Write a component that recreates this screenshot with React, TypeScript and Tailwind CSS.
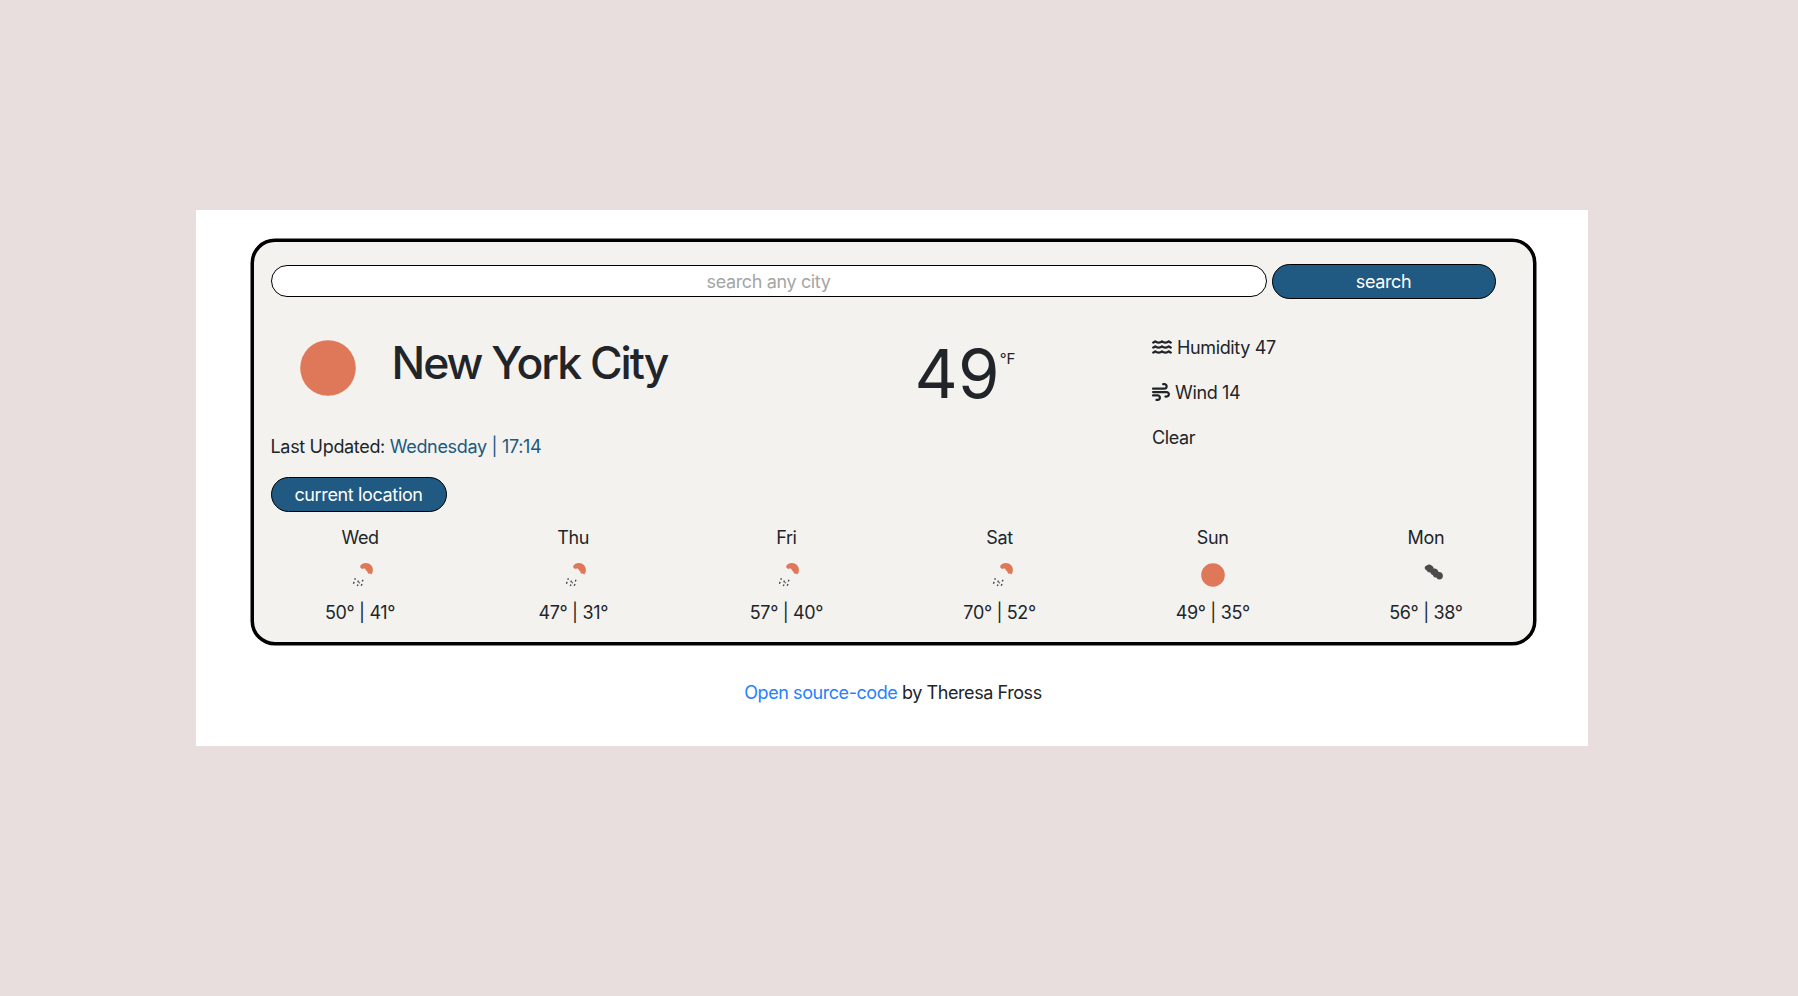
import { FaWater, FaWind } from "react-icons/fa6";

type Sky = "rain" | "clear" | "clouds";

interface Day {
  name: string;
  high: number;
  low: number;
  sky: Sky;
}

const days: Day[] = [
  { name: "Wed", high: 50, low: 41, sky: "rain" },
  { name: "Thu", high: 47, low: 31, sky: "rain" },
  { name: "Fri", high: 57, low: 40, sky: "rain" },
  { name: "Sat", high: 70, low: 52, sky: "rain" },
  { name: "Sun", high: 49, low: 35, sky: "clear" },
  { name: "Mon", high: 56, low: 38, sky: "clouds" },
];

function SkyIcon({ sky }: { sky: Sky }) {
  return (
    <svg viewBox="0 0 44 44" className="mt-[2px] mb-[2px] size-11" aria-hidden="true">
      {sky === "clear" && <circle cx="22" cy="22" r="11.8" fill="#df7858" />}
      {sky === "rain" && (
        <>
          <path
            d="M22.2 13C23.4 11 25.6 9.8 28 9.9C32 10 34.9 13 34.9 16.7C34.9 18.9 34.2 20.4 33.2 21.6C32.4 20.6 31.6 20.5 30.8 20.7C30 20.3 29.4 19.6 29.2 18.2C28.2 18 27.9 16.9 27.3 16C26.2 15.2 25 15.5 23.7 16.1C23.4 15.1 22.9 14.8 22.3 14.7Z"
            fill="#df7858"
          />
          <path
            d="M17.4 25.3l-.6 1.5M16.2 28.9l-.8 1.8M20.5 27.6l-.7 1.6M21.6 29.3l-.4 .9M20 31.4l-.7 1.7M25 26.8l-.7 1.7M24 30.9l-.8 1.9"
            stroke="#48484a"
            strokeWidth="1.4"
            fill="none"
          />
        </>
      )}
      {sky === "clouds" && (
        <path
          d="M20.7 14.8C20.9 13.2 22 12.8 22.8 12.6C23.8 11.2 26.4 11.2 27.5 12.5C28.9 13 29.6 14.1 29.6 15.5C32 15 34.2 16.4 34.6 19.1C36.9 18.7 38.7 20.2 38.9 22.4C39.1 24.7 37.5 26.6 35.3 26.6C33.9 26.6 32.9 25.8 32.4 24.6C30.5 24.6 29.1 23.6 28.8 22C27.4 21.7 26.7 20.8 26.5 19.5L24.9 19.6L24.2 18.8L23.3 18.8L23 17.5C21.7 17.3 20.7 16.3 20.7 14.8Z"
          fill="#4b4b4b"
        />
      )}
    </svg>
  );
}

export default function App() {
  return (
    <div className="flex h-[996px] w-full justify-center bg-[#e8dedd] pt-[210px] pr-[14px] font-[Inter,sans-serif] text-[18px] leading-[27px] tracking-[-0.02em] text-[#212529]">
      <main className="flex h-[536px] w-[1392px] shrink-0 flex-col items-center bg-white pt-[28.5px]">
        <section className="ml-[2px] h-[406px] w-[1285px] rounded-[24px] border-[3px] border-black bg-[#f3f2ef] pl-[17px] shadow-[0_0_0_0.5px_#000]">
          <form className="flex h-[77px] items-center gap-[5px] pt-[2px]">
            <input
              type="text"
              placeholder="search any city"
              className="h-8 w-[996px] rounded-full border border-black bg-white text-center placeholder:text-[#a5a5a5]"
            />
            <button type="button" className="h-[35px] w-[224px] rounded-full border border-black bg-[#205981] text-white">
              search
            </button>
          </form>

          <div className="flex h-[109px] items-start">
            <svg viewBox="0 0 56 56" className="mt-[21px] ml-[29px] size-14 shrink-0" aria-hidden="true">
              <circle cx="28" cy="28" r="27.8" fill="#df7858" />
            </svg>
            <h1 className="mt-[17px] ml-[36px] w-[523px] text-[44.5px] leading-[54px] font-medium tracking-[-0.045em]">New York City</h1>
            <div className="flex w-[237.5px] items-start">
              <span className="mt-[14px] text-[67px] leading-[81px] tracking-[0.003em]">49</span>
              <span className="mt-[30px] text-[15px] leading-5 tracking-[-0.01em]">°F</span>
            </div>
            <ul className="mt-[15px] flex flex-col gap-[18px]">
              <li className="flex items-center gap-[5px]">
                <FaWater className="h-[18px] w-5" />
                Humidity 47
              </li>
              <li className="flex items-center gap-[5px]">
                <FaWind className="size-[18px]" />
                Wind 14
              </li>
              <li>Clear</li>
            </ul>
          </div>

          <p className="mt-[5px] tracking-[-0.018em]">
            Last Updated: <span className="text-[#205981]">Wednesday | 17:14</span>
          </p>
          <button type="button" className="mt-[17px] block h-[35px] w-[176px] rounded-full border border-black bg-[#205981] text-white">
            current location
          </button>

          <div className="mt-[12px] -ml-[17px] grid w-[1279px] grid-cols-6 text-center">
            {days.map((day) => (
              <div key={day.name} className="flex flex-col items-center">
                <div>{day.name}</div>
                <SkyIcon sky={day.sky} />
                <div className="tracking-[-0.02em]">
                  {day.high}° | {day.low}°
                </div>
              </div>
            ))}
          </div>
        </section>
        <footer className="mt-[34.5px] ml-[2px] tracking-[-0.024em]">
          <a href="#" className="text-[#2680ff]">
            Open source-code
          </a>{" "}
          by Theresa Fross
        </footer>
      </main>
    </div>
  );
}
